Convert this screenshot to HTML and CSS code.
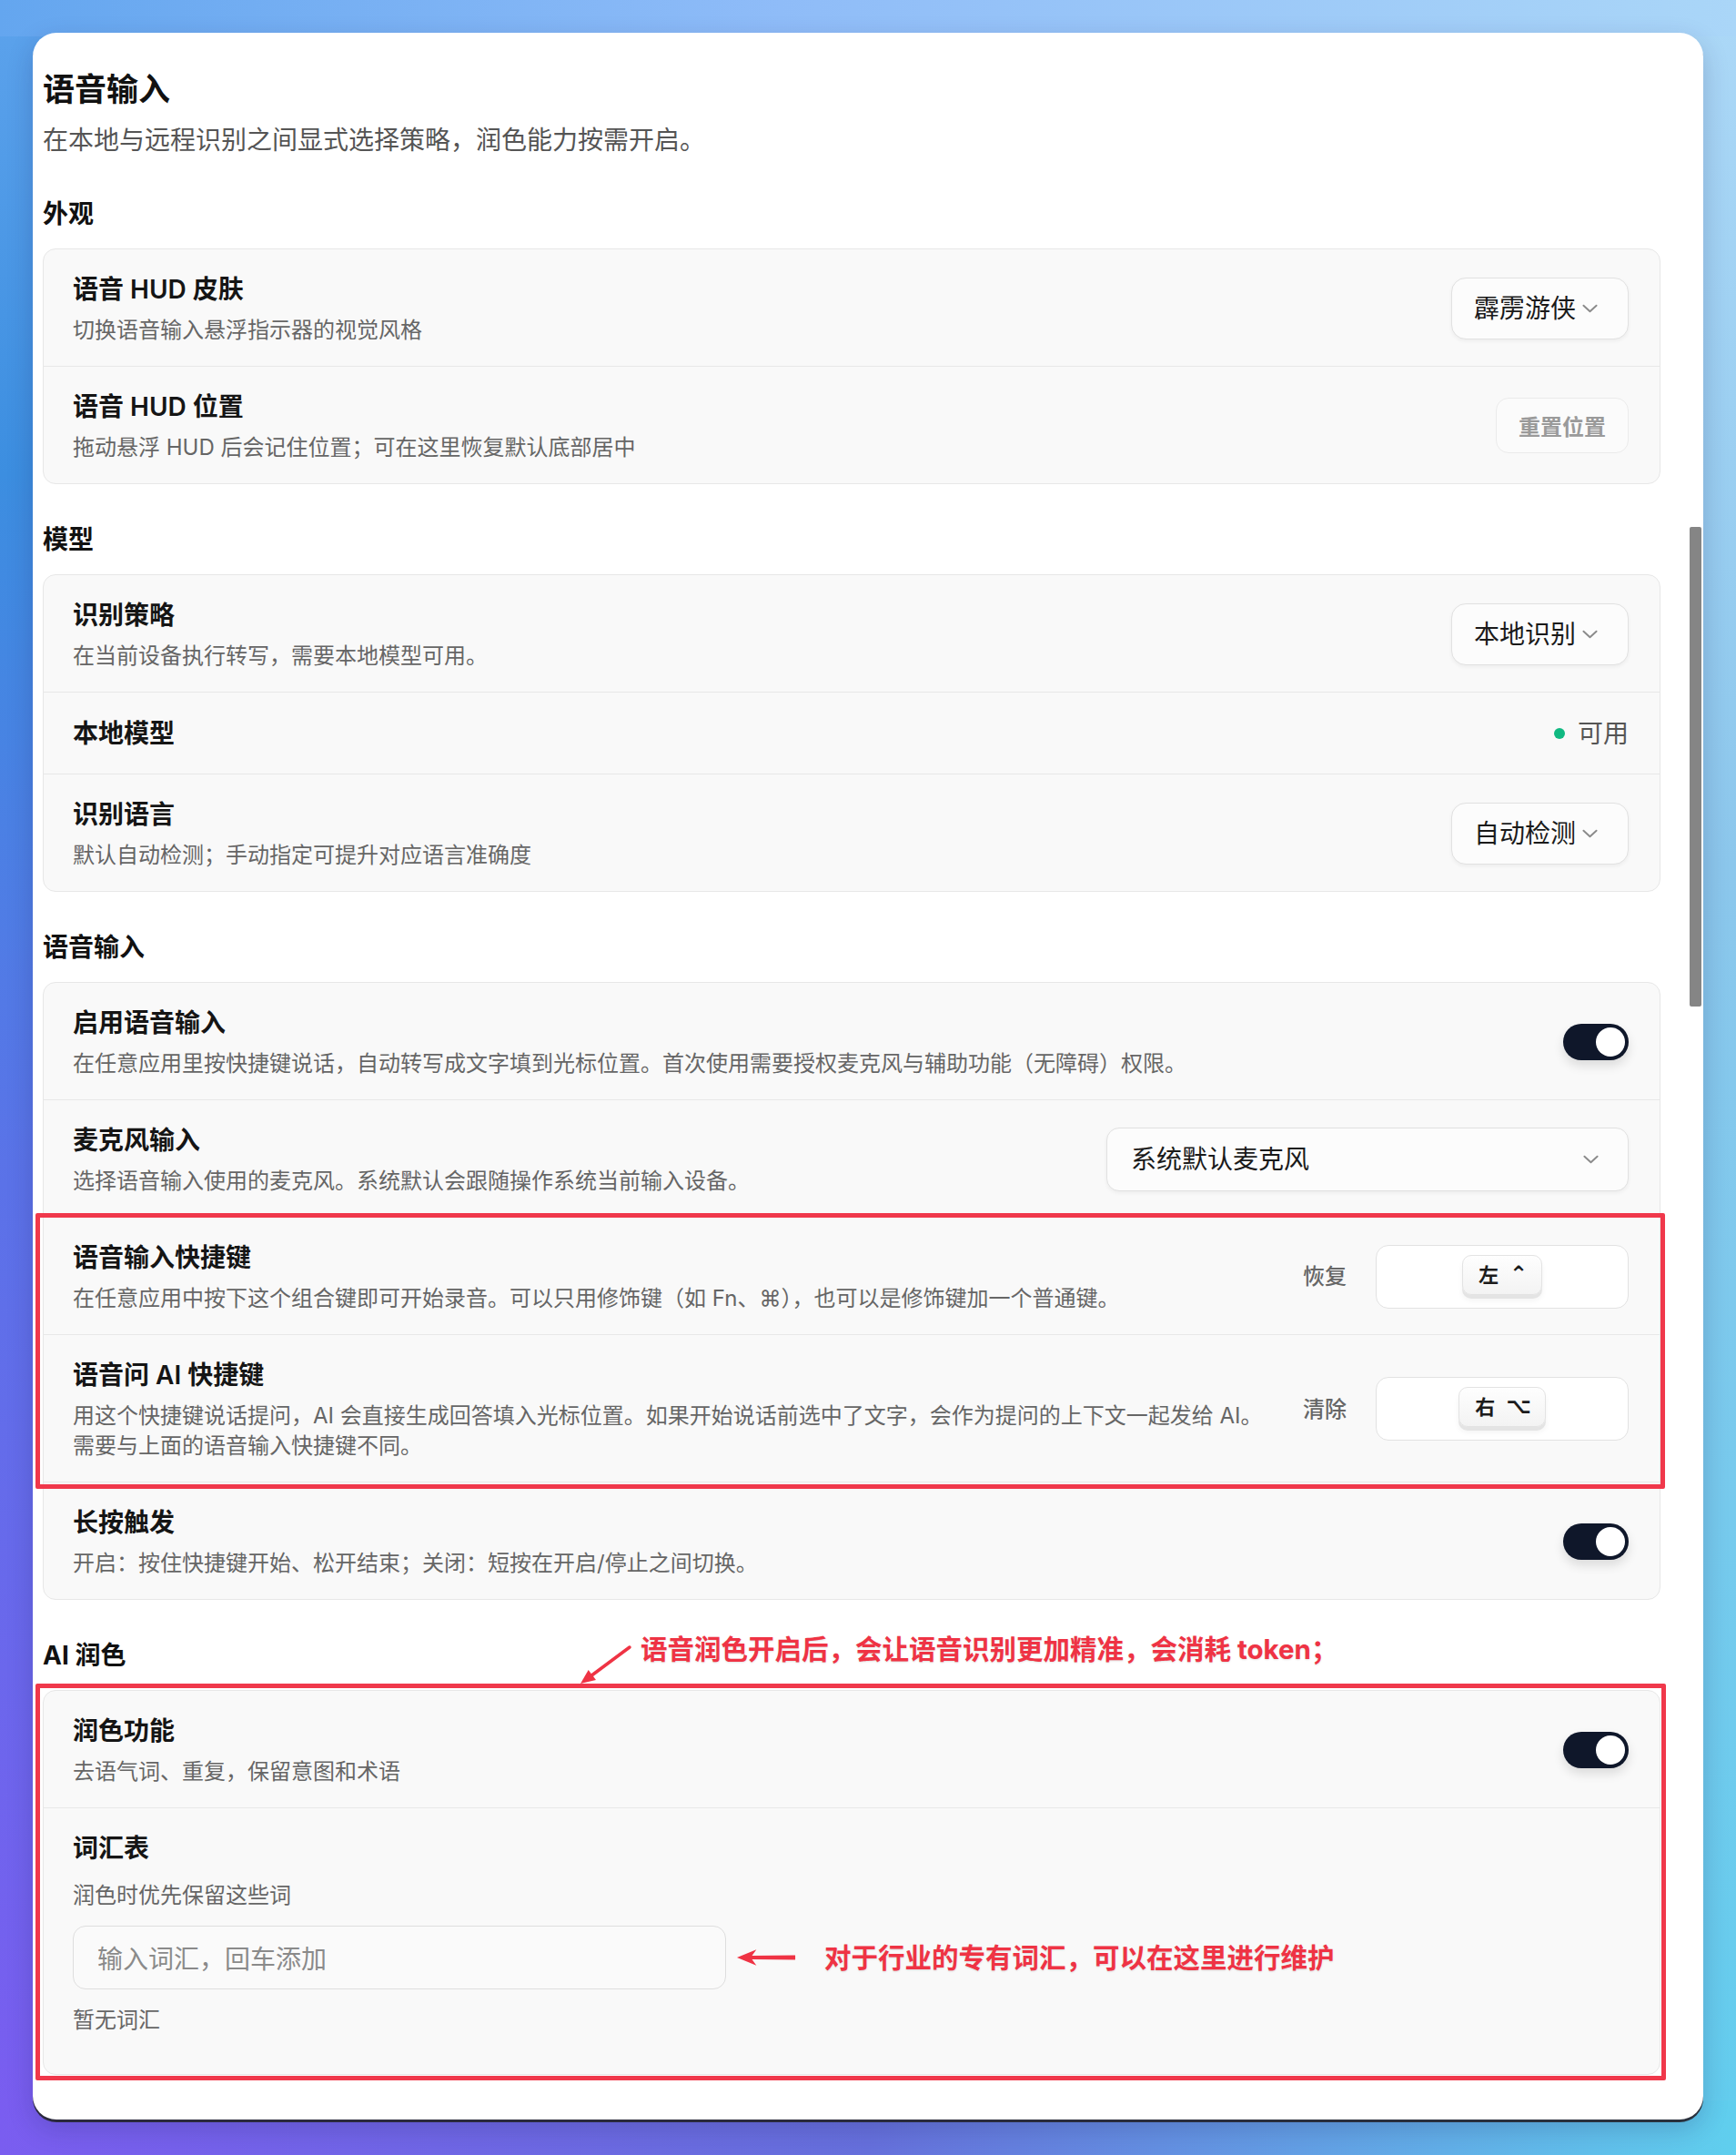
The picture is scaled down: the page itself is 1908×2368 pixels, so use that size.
FILE: index.html
```html
<!DOCTYPE html>
<html lang="zh-CN">
<head>
<meta charset="utf-8">
<title>语音输入</title>
<link rel="stylesheet" href="styles.css">
</head>
<body>
<div class="window">
  <div class="content">
    <h1 class="page-title">语音输入</h1>
    <p class="page-sub">在本地与远程识别之间显式选择策略，润色能力按需开启。</p>

    <section class="section">
      <h2 class="section-title">外观</h2>
      <div class="group">
        <div class="row">
          <div class="row-text">
            <div class="row-title">语音 HUD 皮肤</div>
            <div class="row-desc">切换语音输入悬浮指示器的视觉风格</div>
          </div>
          <div class="select"><span>霹雳游侠</span><svg class="chev" viewBox="0 0 18 10"><path d="M1.5 1.5 L9 8.5 L16.5 1.5"/></svg></div>
        </div>
        <div class="row">
          <div class="row-text">
            <div class="row-title">语音 HUD 位置</div>
            <div class="row-desc">拖动悬浮 HUD 后会记住位置；可在这里恢复默认底部居中</div>
          </div>
          <div class="btn-ghost">重置位置</div>
        </div>
      </div>
    </section>

    <section class="section">
      <h2 class="section-title">模型</h2>
      <div class="group">
        <div class="row">
          <div class="row-text">
            <div class="row-title">识别策略</div>
            <div class="row-desc">在当前设备执行转写，需要本地模型可用。</div>
          </div>
          <div class="select"><span>本地识别</span><svg class="chev" viewBox="0 0 18 10"><path d="M1.5 1.5 L9 8.5 L16.5 1.5"/></svg></div>
        </div>
        <div class="row row-simple">
          <div class="row-text">
            <div class="row-title">本地模型</div>
          </div>
          <div class="status"><span class="dot"></span><span>可用</span></div>
        </div>
        <div class="row">
          <div class="row-text">
            <div class="row-title">识别语言</div>
            <div class="row-desc">默认自动检测；手动指定可提升对应语言准确度</div>
          </div>
          <div class="select"><span>自动检测</span><svg class="chev" viewBox="0 0 18 10"><path d="M1.5 1.5 L9 8.5 L16.5 1.5"/></svg></div>
        </div>
      </div>
    </section>

    <section class="section">
      <h2 class="section-title">语音输入</h2>
      <div class="group">
        <div class="row">
          <div class="row-text">
            <div class="row-title">启用语音输入</div>
            <div class="row-desc">在任意应用里按快捷键说话，自动转写成文字填到光标位置。首次使用需要授权麦克风与辅助功能（无障碍）权限。</div>
          </div>
          <div class="toggle"></div>
        </div>
        <div class="row">
          <div class="row-text">
            <div class="row-title">麦克风输入</div>
            <div class="row-desc">选择语音输入使用的麦克风。系统默认会跟随操作系统当前输入设备。</div>
          </div>
          <div class="select select-wide"><span>系统默认麦克风</span><svg class="chev" viewBox="0 0 18 10"><path d="M1.5 1.5 L9 8.5 L16.5 1.5"/></svg></div>
        </div>
        <div class="annot">
          <div class="row">
            <div class="row-text">
              <div class="row-title">语音输入快捷键</div>
              <div class="row-desc">在任意应用中按下这个组合键即可开始录音。可以只用修饰键（如 Fn、⌘），也可以是修饰键加一个普通键。</div>
            </div>
            <div class="shortcut-ctl">
              <span class="link">恢复</span>
              <div class="shortcut"><span class="keycap"><span>左</span><span class="sym">⌃</span></span></div>
            </div>
          </div>
          <div class="row">
            <div class="row-text">
              <div class="row-title">语音问 AI 快捷键</div>
              <div class="row-desc">用这个快捷键说话提问，AI 会直接生成回答填入光标位置。如果开始说话前选中了文字，会作为提问的上下文一起发给 AI。需要与上面的语音输入快捷键不同。</div>
            </div>
            <div class="shortcut-ctl">
              <span class="link">清除</span>
              <div class="shortcut"><span class="keycap"><span>右</span><span class="sym">⌥</span></span></div>
            </div>
          </div>
        </div>
        <div class="row">
          <div class="row-text">
            <div class="row-title">长按触发</div>
            <div class="row-desc">开启：按住快捷键开始、松开结束；关闭：短按在开启/停止之间切换。</div>
          </div>
          <div class="toggle"></div>
        </div>
      </div>
    </section>

    <section class="section">
      <h2 class="section-title section-annotated">AI 润色
        <svg class="arrow-diag" viewBox="0 0 60 46"><line x1="56" y1="4" x2="15" y2="34.5"/><polygon points="2,44 19,40.1 10.7,28.9"/></svg>
        <span class="note note-top">语音润色开启后，会让语音识别更加精准，会消耗 token；</span>
      </h2>
      <div class="group group-annot">
        <div class="row">
          <div class="row-text">
            <div class="row-title">润色功能</div>
            <div class="row-desc">去语气词、重复，保留意图和术语</div>
          </div>
          <div class="toggle"></div>
        </div>
        <div class="row vocab">
          <div class="row-title">词汇表</div>
          <div class="row-desc vocab-desc">润色时优先保留这些词</div>
          <div class="vocab-input-row">
            <div class="vocab-input">输入词汇，回车添加</div>
            <svg class="arrow-left" viewBox="0 0 68 20"><polygon points="0,10 22,1 17,8 66,7.5 66,12.5 17,12 22,19"/></svg>
            <span class="note">对于行业的专有词汇，可以在这里进行维护</span>
          </div>
          <div class="row-desc vocab-empty">暂无词汇</div>
        </div>
      </div>
    </section>
  </div>
  <div class="scrollbar"></div>
</div>
</body>
</html>
```
FILE: styles.css
```css
* { box-sizing: border-box; }

html, body {
  margin: 0;
  padding: 0;
}

body {
  width: 1908px;
  min-height: 2368px;
  padding: 36px 36px 38px 36px;
  font-family: "Inter", "Noto Sans CJK SC", "DejaVu Sans", sans-serif;
  color: #1a1a1a;
  background:
    linear-gradient(to right, #64a6ef 0%, #8fbcf8 45%, #aad6f8 100%) top / 100% 40px no-repeat,
    linear-gradient(to right, #7a5df0 0%, #6670dc 50%, #60cfee 100%) bottom / 100% 60px no-repeat,
    linear-gradient(to bottom, #5da3ec 0%, #3c8ee0 22%, #5b72e8 55%, #7b5cf0 100%) left / 50% 100% no-repeat,
    linear-gradient(to bottom, #acd8f7 0%, #8cc7ec 40%, #62cdee 100%) right / 50% 100% no-repeat;
}

.window {
  position: relative;
  width: 1836px;
  background: #ffffff;
  border-radius: 26px;
  padding: 38px 47px 49px 11px;
  box-shadow: 0 3px 0 0 rgba(38, 38, 48, 0.92), 0 10px 28px rgba(30, 30, 90, 0.22);
}

.page-title {
  margin: 0;
  font-size: 35px;
  line-height: 48px;
  font-weight: 700;
  color: #111;
}

.page-sub {
  margin: 12px 0 0;
  font-size: 28px;
  line-height: 40px;
  color: #555;
}

.section { margin-top: 41px; }

.section-title {
  margin: 0 0 18px;
  font-size: 28px;
  line-height: 40px;
  font-weight: 700;
  color: #111;
}

.section-annotated { position: relative; }

.group {
  background: #f9f9f9;
  border: 1px solid #e7e7e7;
  border-radius: 14px;
}

.group > * + *,
.annot > .row + .row {
  border-top: 1px solid #e8e8e8;
}

.row {
  display: flex;
  align-items: center;
  justify-content: space-between;
  gap: 40px;
  padding: 24px 34px 23px 32px;
}

.row-simple { padding: 25px 34px 24px 32px; }

.row-text { flex: 1; min-width: 0; }

.row-title {
  font-size: 28px;
  line-height: 40px;
  font-weight: 600;
  color: #151515;
}

.row-desc {
  margin-top: 8px;
  font-size: 24px;
  line-height: 33px;
  color: #666;
}

/* select */
.select {
  flex: none;
  height: 68px;
  display: flex;
  align-items: center;
  gap: 7px;
  padding: 0 33px 0 24px;
  background: #fcfcfc;
  border: 1.5px solid #e1e1e1;
  border-radius: 16px;
  box-shadow: 0 2px 4px rgba(0, 0, 0, 0.05);
  font-size: 28px;
  line-height: 40px;
  color: #1a1a1a;
}

.select-wide {
  width: 574px;
  height: 70px;
  justify-content: space-between;
  padding: 0 32px 0 26px;
  border-radius: 14px;
}

.chev {
  width: 17px;
  height: 10px;
  fill: none;
  stroke: #8a8a8a;
  stroke-width: 2;
  stroke-linecap: round;
  stroke-linejoin: round;
}

.btn-ghost {
  flex: none;
  height: 61px;
  padding: 0 24px;
  display: flex;
  align-items: center;
  background: #fbfbfb;
  border: 1.5px solid #ebebeb;
  border-radius: 14px;
  font-size: 24px;
  font-weight: 600;
  color: #9a9a9a;
}

.status {
  display: flex;
  align-items: center;
  gap: 14px;
  font-size: 28px;
  line-height: 40px;
  color: #555;
}

.dot {
  width: 12px;
  height: 12px;
  border-radius: 50%;
  background: #10b981;
}

/* toggle */
.toggle {
  flex: none;
  position: relative;
  width: 72px;
  height: 40px;
  border-radius: 20px;
  background: #0f172a;
  box-shadow: 0 6px 12px rgba(0, 0, 0, 0.12);
}

.toggle::after {
  content: "";
  position: absolute;
  right: 4px;
  top: 4px;
  width: 32px;
  height: 32px;
  border-radius: 50%;
  background: #fff;
}

/* shortcut */
.shortcut-ctl {
  flex: none;
  display: flex;
  align-items: center;
  gap: 32px;
}

.link {
  font-size: 24px;
  line-height: 33px;
  font-weight: 500;
  color: #666;
}

.shortcut {
  width: 278px;
  height: 70px;
  display: flex;
  align-items: center;
  justify-content: center;
  background: #fff;
  border: 1.5px solid #e2e2e2;
  border-radius: 14px;
}

.keycap {
  display: flex;
  align-items: center;
  gap: 12px;
  height: 44px;
  margin-top: -4px;
  padding: 0 15px 0 17px;
  border: 1px solid #e3e3e3;
  border-radius: 10px;
  background: linear-gradient(#fefefe, #f3f3f3);
  box-shadow: 0 4px 0 #e4e4e4, 0 6px 6px rgba(0, 0, 0, 0.05);
  font-size: 22px;
  line-height: 30px;
  font-weight: 700;
  color: #1c1c1c;
}

.keycap .sym {
  font-family: "DejaVu Sans", sans-serif;
  font-size: 24px;
  font-weight: 700;
  line-height: 24px;
  margin-top: -2px;
}

/* annotations */
.annot { position: relative; }

.annot::after {
  content: "";
  position: absolute;
  top: -5px;
  bottom: -8px;
  left: -9px;
  right: -6px;
  border: 5px solid #f0384b;
  border-radius: 2px;
  pointer-events: none;
}

.group-annot { position: relative; }

.group-annot::after {
  content: "";
  position: absolute;
  top: -8px;
  bottom: -7px;
  left: -9px;
  right: -7px;
  border: 5px solid #f0384b;
  border-radius: 2px;
  pointer-events: none;
}

.note {
  font-size: 29.5px;
  line-height: 40px;
  font-weight: 700;
  color: #ef3344;
  text-shadow: 0 1px 2px rgba(0, 0, 0, 0.12);
  white-space: nowrap;
}

.note-top {
  position: absolute;
  left: 657px;
  top: -7px;
}

.arrow-diag {
  position: absolute;
  left: 589px;
  top: 7px;
  width: 60px;
  height: 46px;
}

.arrow-diag line {
  stroke: #ef3344;
  stroke-width: 3.5;
  stroke-linecap: round;
}

.arrow-diag polygon { fill: #ef3344; }

.vocab {
  flex-direction: column;
  align-items: stretch;
  gap: 0;
  padding-bottom: 43px;
}

.vocab-desc { margin-top: 15px; }

.vocab-input-row {
  margin-top: 17px;
  display: flex;
  align-items: center;
}

.vocab-input {
  width: 718px;
  height: 70px;
  display: flex;
  align-items: center;
  padding-left: 26px;
  background: #fafafa;
  border: 1.5px solid #dedede;
  border-radius: 14px;
  font-size: 28px;
  color: #8a8a8a;
}

.arrow-left {
  margin-left: 12px;
  width: 66px;
  height: 20px;
  fill: #ef3344;
}

.vocab-input-row .note { margin-left: 30px; }

.vocab-empty { margin-top: 17px; }

.scrollbar {
  position: absolute;
  top: 543px;
  right: 2px;
  width: 13px;
  height: 527px;
  background: #858585;
  border-radius: 2px;
}
```
